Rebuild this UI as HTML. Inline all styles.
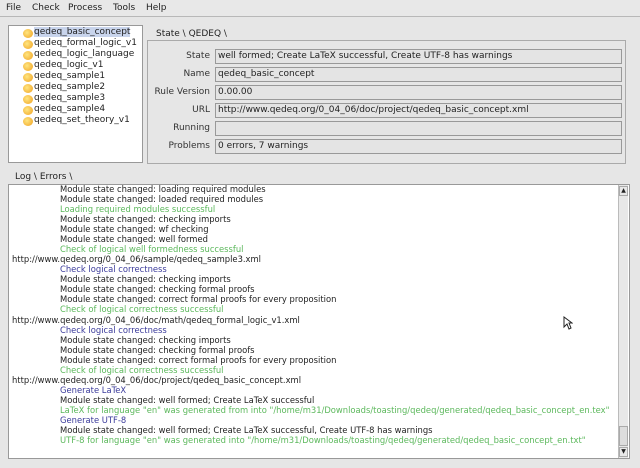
<!DOCTYPE html>
<html><head><style>
*{margin:0;padding:0;box-sizing:border-box}
body{width:640px;height:468px;background:#e6e6e6;font-family:"DejaVu Sans","Liberation Sans",sans-serif;font-size:8.5px;color:#222;position:relative;overflow:hidden}
.a{position:absolute}
.menu{top:0;left:0;width:640px;height:17px;border-bottom:1px solid #b8b8b8;background:#e8e8e8}
.menu span{position:absolute;top:3px;font-size:9px}
.tree{left:8px;top:25px;width:135px;height:138px;background:#fff;border:1px solid #999}
.ti{position:absolute;left:25px;font-size:9px;white-space:nowrap}
.ic{position:absolute;left:14px;width:10px;height:9px;border-radius:50%;background:radial-gradient(circle at 40% 40%,#ffe680,#f0a020)}
.panel{left:147px;top:40px;width:479px;height:124px;border:1px solid #aaa}
.lbl{position:absolute;right:430px;font-size:9px;color:#333;text-align:right}
.fld{position:absolute;left:215px;width:407px;height:15px;border:1px solid #999;background:#e4e4e4;font-size:9px;padding:1px 2px;white-space:nowrap}
.tab{position:absolute;font-size:9px}
.log{left:8px;top:184px;width:622px;height:275px;background:#fff;border:1px solid #999}
.l{position:absolute;left:51px;white-space:nowrap;font-size:8.4px;line-height:10px}
.u{left:3px}.g{color:#5cb85c}.b{color:#3b3b9b}
.sb{position:absolute;right:1px;top:0;width:10px;height:273px;border-left:1px solid #bbb;background:#e8e8e8}
</style></head><body>
<div class="a menu"><span style="left:6px">File</span><span style="left:32px">Check</span><span style="left:68px">Process</span><span style="left:113px">Tools</span><span style="left:146px">Help</span></div>
<div class="a tree">
<div class="ti" style="top:1px;background:#c8d4ec">qedeq_basic_concept</div>
<div class="ti" style="top:12px">qedeq_formal_logic_v1</div>
<div class="ti" style="top:23px">qedeq_logic_language</div>
<div class="ti" style="top:34px">qedeq_logic_v1</div>
<div class="ti" style="top:45px">qedeq_sample1</div>
<div class="ti" style="top:56px">qedeq_sample2</div>
<div class="ti" style="top:67px">qedeq_sample3</div>
<div class="ti" style="top:78px">qedeq_sample4</div>
<div class="ti" style="top:89px">qedeq_set_theory_v1</div>
<div class="ic" style="top:3px"></div><div class="ic" style="top:14px"></div><div class="ic" style="top:25px"></div><div class="ic" style="top:36px"></div><div class="ic" style="top:47px"></div><div class="ic" style="top:58px"></div><div class="ic" style="top:69px"></div><div class="ic" style="top:80px"></div><div class="ic" style="top:91px"></div>
</div>
<div class="tab" style="left:156px;top:29px">State \ QEDEQ \</div>
<div class="a panel"></div>
<div class="lbl" style="top:51px">State</div><div class="fld" style="top:49px">well formed; Create LaTeX successful, Create UTF-8 has warnings</div>
<div class="lbl" style="top:69px">Name</div><div class="fld" style="top:67px">qedeq_basic_concept</div>
<div class="lbl" style="top:87px">Rule Version</div><div class="fld" style="top:85px">0.00.00</div>
<div class="lbl" style="top:105px">URL</div><div class="fld" style="top:103px">http://www.qedeq.org/0_04_06/doc/project/qedeq_basic_concept.xml</div>
<div class="lbl" style="top:123px">Running</div><div class="fld" style="top:121px"></div>
<div class="lbl" style="top:141px">Problems</div><div class="fld" style="top:139px">0 errors, 7 warnings</div>
<div class="tab" style="left:15px;top:172px">Log \ Errors \</div>
<div class="a log">
<div class="l" style="top:-1px">Module state changed: loading required modules</div>
<div class="l" style="top:9px">Module state changed: loaded required modules</div>
<div class="l g" style="top:19px">Loading required modules successful</div>
<div class="l" style="top:29px">Module state changed: checking imports</div>
<div class="l" style="top:39px">Module state changed: wf checking</div>
<div class="l" style="top:49px">Module state changed: well formed</div>
<div class="l g" style="top:59px">Check of logical well formedness successful</div>
<div class="l u" style="top:69px">http://www.qedeq.org/0_04_06/sample/qedeq_sample3.xml</div>
<div class="l b" style="top:79px">Check logical correctness</div>
<div class="l" style="top:89px">Module state changed: checking imports</div>
<div class="l" style="top:99px">Module state changed: checking formal proofs</div>
<div class="l" style="top:109px">Module state changed: correct formal proofs for every proposition</div>
<div class="l g" style="top:119px">Check of logical correctness successful</div>
<div class="l u" style="top:130px">http://www.qedeq.org/0_04_06/doc/math/qedeq_formal_logic_v1.xml</div>
<div class="l b" style="top:140px">Check logical correctness</div>
<div class="l" style="top:150px">Module state changed: checking imports</div>
<div class="l" style="top:160px">Module state changed: checking formal proofs</div>
<div class="l" style="top:170px">Module state changed: correct formal proofs for every proposition</div>
<div class="l g" style="top:180px">Check of logical correctness successful</div>
<div class="l u" style="top:190px">http://www.qedeq.org/0_04_06/doc/project/qedeq_basic_concept.xml</div>
<div class="l b" style="top:200px">Generate LaTeX</div>
<div class="l" style="top:210px">Module state changed: well formed; Create LaTeX successful</div>
<div class="l g" style="top:220px">LaTeX for language "en" was generated from into "/home/m31/Downloads/toasting/qedeq/generated/qedeq_basic_concept_en.tex"</div>
<div class="l b" style="top:230px">Generate UTF-8</div>
<div class="l" style="top:240px">Module state changed: well formed; Create LaTeX successful, Create UTF-8 has warnings</div>
<div class="l g" style="top:250px">UTF-8 for language "en" was generated into "/home/m31/Downloads/toasting/qedeq/generated/qedeq_basic_concept_en.txt"</div>
<div class="sb"><div style="position:absolute;top:1px;left:0;width:9px;height:10px;border:1px solid #aaa;font-size:6px;text-align:center">▲</div><div style="position:absolute;bottom:1px;left:0;width:9px;height:10px;border:1px solid #aaa;font-size:6px;text-align:center">▼</div><div style="position:absolute;bottom:12px;left:0;width:9px;height:20px;border:1px solid #aaa;background:#ddd"></div></div>
</div>
<svg class="a" style="left:563px;top:316px" width="10" height="14"><path d="M1 1 L1 11 L4 8 L6 13 L8 12 L6 7 L9 7 Z" fill="#fff" stroke="#222" stroke-width="1"/></svg>
</body></html>
